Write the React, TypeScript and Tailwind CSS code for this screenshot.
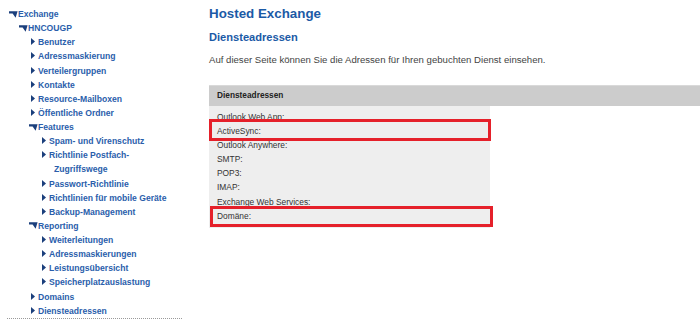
import React from "react";

type NavItem = {
  label: React.ReactNode;
  level: number;
  open?: boolean;
};

const navItems: NavItem[] = [
  { label: "Exchange", level: 0, open: true },
  { label: "HNCOUGP", level: 1, open: true },
  { label: "Benutzer", level: 2 },
  { label: "Adressmaskierung", level: 2 },
  { label: "Verteilergruppen", level: 2 },
  { label: "Kontakte", level: 2 },
  { label: "Resource-Mailboxen", level: 2 },
  { label: "Öffentliche Ordner", level: 2 },
  { label: "Features", level: 2, open: true },
  { label: "Spam- und Virenschutz", level: 3 },
  {
    label: (
      <>
        Richtlinie Postfach-
        <br />
        <span className="pl-[5px]">Zugriffswege</span>
      </>
    ),
    level: 3,
  },
  { label: "Passwort-Richtlinie", level: 3 },
  { label: "Richtlinien für mobile Geräte", level: 3 },
  { label: "Backup-Management", level: 3 },
  { label: "Reporting", level: 2, open: true },
  { label: "Weiterleitungen", level: 3 },
  { label: "Adressmaskierungen", level: 3 },
  { label: "Leistungsübersicht", level: 3 },
  { label: "Speicherplatzauslastung", level: 3 },
  { label: "Domains", level: 2 },
  { label: "Diensteadressen", level: 2 },
];

const levelPad = ["pl-[1px]", "pl-[11px]", "pl-[21px]", "pl-[32px]"];

const rows = [
  "Outlook Web App:",
  "ActiveSync:",
  "Outlook Anywhere:",
  "SMTP:",
  "POP3:",
  "IMAP:",
  "Exchange Web Services:",
  "Domäne:",
];

function Arrow({ open }: { open?: boolean }) {
  // tree toggles: small triangle when closed, bent arrow when open
  if (open) {
    return (
      <svg width="9" height="7" viewBox="0 0 9 7" className="ml-[1px] mt-[3.5px] shrink-0">
        <polygon points="0,0.3 8.6,0.3 6.6,6.8 3.6,2.4 0,2.4" fill="#1b3f7c" />
      </svg>
    );
  }
  return (
    <svg width="4" height="7" viewBox="0 0 4 7" className="ml-[3px] mt-[3px] shrink-0">
      <polygon points="0,0 4,3.5 0,7" fill="#1b3f7c" />
    </svg>
  );
}

function Sidebar() {
  return (
    <div className="w-[209px] shrink-0 pt-[7px]">
      <ul className="ml-[7px] w-[175px] border-b border-dotted border-[#9a9a9a]">
        {navItems.map((item, i) => (
          <li
            key={i}
            className={`flex ${levelPad[item.level]} text-[8.6px] font-bold leading-[14.12px] text-[#2a5eab]`}
          >
            <span className="flex w-[10px] shrink-0">
              <Arrow open={item.open} />
            </span>
            <span>{item.label}</span>
          </li>
        ))}
      </ul>
    </div>
  );
}

export default function App() {
  return (
    <div className="flex min-h-[328px] w-[700px] bg-white font-['Liberation_Sans',Arial,sans-serif]">
      <Sidebar />
      <div className="flex-1">
        <h1 className="mt-[6px] text-[13.35px] font-bold leading-[16px] text-[#1b5aa6]">
          Hosted Exchange
        </h1>
        <h2 className="mt-[8px] text-[11.1px] font-bold leading-[14px] text-[#1b5aa6]">
          Diensteadressen
        </h2>
        <p className="mt-[10px] text-[9.6px] leading-[12px] text-[#444444]">
          Auf dieser Seite können Sie die Adressen für Ihren gebuchten Dienst einsehen.
        </p>

        <div className="mt-[19px] h-[21px] border-t border-[#d9d9d9] bg-[#cccccc] pl-[8px] text-[8.3px] font-bold leading-[19px] text-[#222222]">
          Diensteadressen
        </div>
        <div className="w-[281px] bg-[#eeeeee] pb-[5px] pl-[8px] pt-[4px]">
          {rows.map((r, i) => (
            <div key={r} className="relative text-[8.4px] leading-[14.1px] text-[#333333]">
              {r}
              {i === 1 && (
                <div className="absolute -bottom-[3px] -left-[8px] -right-[1px] -top-[5px] border-[3px] border-[#e5202a]" />
              )}
              {i === 7 && (
                <div className="absolute -bottom-[4px] -left-[7px] -right-[3px] -top-[3px] border-[3px] border-[#e5202a]" />
              )}
            </div>
          ))}
        </div>
      </div>
    </div>
  );
}
